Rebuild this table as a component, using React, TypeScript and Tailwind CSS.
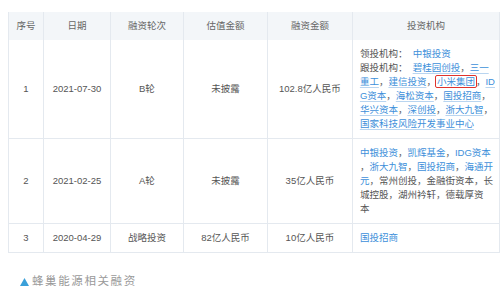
const font = { fontFamily: '"Liberation Sans", "Noto Sans CJK SC", sans-serif' }

const Link = ({ children, u }: { children: React.ReactNode; u?: boolean }) => (
  <span className={u ? 'text-[#3d8fda] underline decoration-[#b9d5f0] underline-offset-2' : 'text-[#3d8fda]'}>
    {children}
  </span>
)

const C = () => <span className="text-[#666]">，</span>

type Row = {
  no: string
  date: string
  round: string
  valuation: string
  amount: string
  investors: React.ReactNode[]
}

const rows: Row[] = [
  {
    no: '1',
    date: '2021-07-30',
    round: 'B轮',
    valuation: '未披露',
    amount: '102.8亿人民币',
    investors: [
      <>领投机构：&nbsp; <Link>中银投资</Link></>,
      <>跟投机构：&nbsp; <Link u>碧桂园创投</Link><C /><Link u>三一</Link></>,
      <>
        <Link u>重工</Link><C /><Link u>建信投资</Link><C />
        <span className="rounded-[1px] px-[1px] outline outline-[1.5px] outline-[#e0332b]">
          <Link u>小米集团</Link>
        </span>
        <C /><Link u>ID</Link>
      </>,
      <><Link u>G资本</Link><C /><Link u>海松资本</Link><C /><Link u>国投招商</Link><C /></>,
      <><Link u>华兴资本</Link><C /><Link u>深创投</Link><C /><Link u>浙大九智</Link><C /></>,
      <><Link u>国家科技风险开发事业中心</Link></>,
    ],
  },
  {
    no: '2',
    date: '2021-02-25',
    round: 'A轮',
    valuation: '未披露',
    amount: '35亿人民币',
    investors: [
      <><Link>中银投资</Link><C /><Link>凯辉基金</Link><C /><Link>IDG资本</Link></>,
      <><C /><Link>浙大九智</Link><C /><Link>国投招商</Link><C /><Link>海通开</Link></>,
      <><Link>元</Link><C />常州创投<C />金融街资本<C />长</>,
      <>城控股<C />湖州衿轩<C />德载厚资</>,
      <>本</>,
    ],
  },
  {
    no: '3',
    date: '2020-04-29',
    round: '战略投资',
    valuation: '82亿人民币',
    amount: '10亿人民币',
    investors: [<><Link>国投招商</Link></>],
  },
]

const widths = ['w-[35px]', 'w-[67px]', 'w-[73px]', 'w-[84px]', 'w-[85px]', 'w-[135px]']
const headers = ['序号', '日期', '融资轮次', '估值金额', '融资金额', '投资机构']

export default function App() {
  return (
    <div className="h-[295px] w-[500px] bg-white pl-[8px] pt-[12px]" style={font}>
      <table className="table-fixed border-collapse text-[9.5px] text-[#555]">
        <thead>
          <tr className="h-[28px] bg-[#f3f6f9] text-[#666]">
            {headers.map((h, i) => (
              <th key={h} className={`${widths[i]} border-x border-[#e4e9ef] p-0 text-center font-normal`}>
                {h}
              </th>
            ))}
          </tr>
        </thead>
        <tbody>
          {rows.map((r) => (
            <tr key={r.no} className="border-b border-[#e4e9ef]">
              <td className="border-x border-[#e4e9ef] p-0 text-center">{r.no}</td>
              <td className="border-x border-[#e4e9ef] p-0 text-center">{r.date}</td>
              <td className="border-x border-[#e4e9ef] p-0 text-center">{r.round}</td>
              <td className="border-x border-[#e4e9ef] p-0 text-center">{r.valuation}</td>
              <td className="border-x border-[#e4e9ef] p-0 text-center">{r.amount}</td>
              <td className="border-x border-[#e4e9ef] py-[7px] pl-[7px] pr-[4px] leading-[14px]">
                {r.investors.map((line, i) => (
                  <div key={i} className="whitespace-nowrap">
                    {line}
                  </div>
                ))}
              </td>
            </tr>
          ))}
        </tbody>
      </table>
      <div className="mt-[20px] flex items-center gap-[3px] pl-[12px] text-[11.5px] tracking-[1.6px] text-[#9a9a9a]">
        <svg width="9" height="8" viewBox="0 0 9 8">
          <polygon points="4.5,0 9,8 0,8" fill="#3ba0d9" />
        </svg>
        <span>蜂巢能源相关融资</span>
      </div>
    </div>
  )
}
